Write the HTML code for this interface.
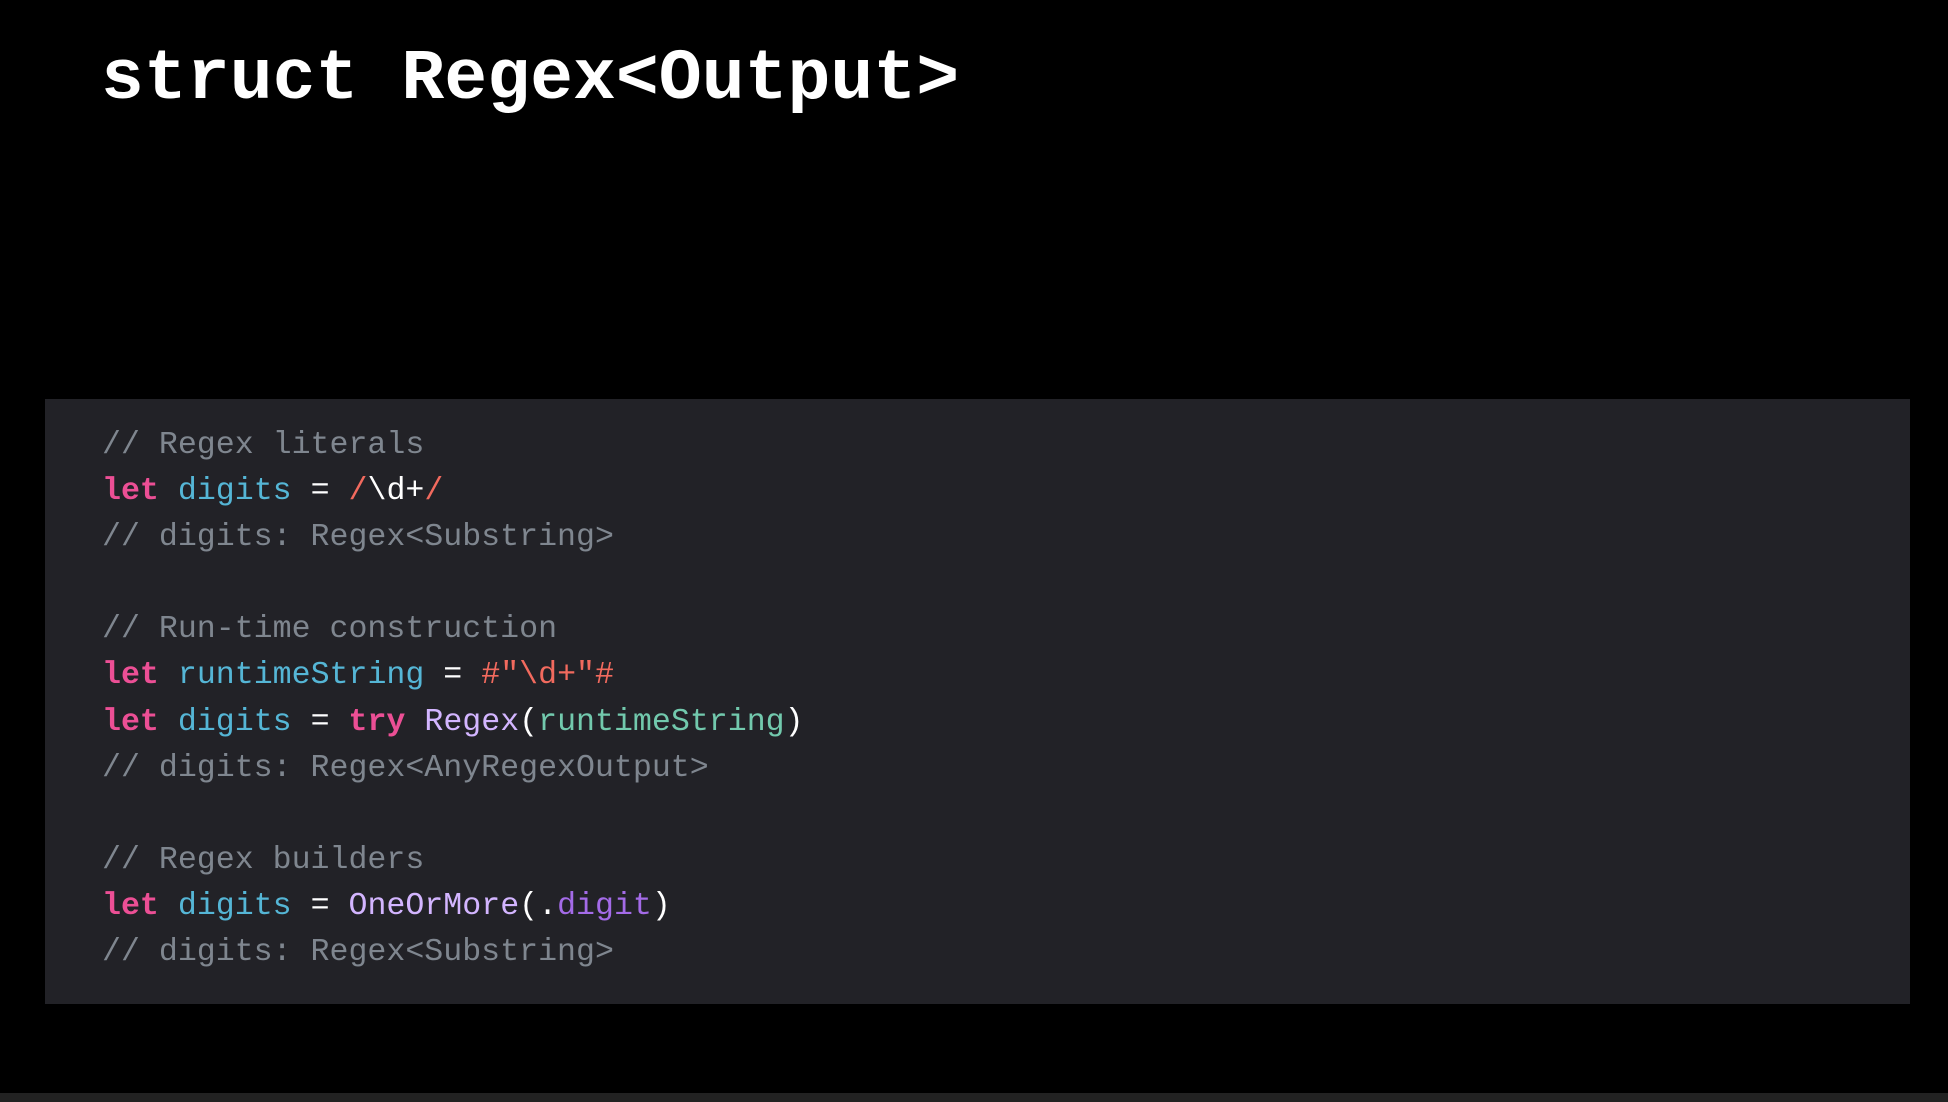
<!DOCTYPE html>
<html><head><meta charset="utf-8"><style>
html,body{margin:0;padding:0;background:#000;width:1948px;height:1102px;overflow:hidden;position:relative}
.t{position:absolute;left:101px;top:37px;font:bold 71.5px/86px "Liberation Mono",monospace;color:#fff;white-space:pre;margin:0}
.p{position:absolute;left:45px;top:399px;width:1865px;height:605px;background:#222227}
pre{position:absolute;left:102px;top:423px;margin:0;font:31.6px/46.1px "Liberation Mono",monospace;color:#fff}
.c{color:#7f868f}.k{color:#ec4f95;font-weight:bold}.v{color:#55b6d6}.s{color:#f26a5e}.ty{color:#d3b5ff}.f{color:#72c9ad}.m{color:#a46be8}
.b{position:absolute;left:0;top:1093px;width:1948px;height:9px;background:#222}
</style></head><body>
<div class="t">struct Regex&lt;Output&gt;</div>
<div class="p"></div>
<pre><span class="c">// Regex literals</span>
<span class="k">let</span> <span class="v">digits</span> = <span class="s">/</span>\d+<span class="s">/</span>
<span class="c">// digits: Regex&lt;Substring&gt;</span>

<span class="c">// Run-time construction</span>
<span class="k">let</span> <span class="v">runtimeString</span> = <span class="s">#"\d+"#</span>
<span class="k">let</span> <span class="v">digits</span> = <span class="k">try</span> <span class="ty">Regex</span>(<span class="f">runtimeString</span>)
<span class="c">// digits: Regex&lt;AnyRegexOutput&gt;</span>

<span class="c">// Regex builders</span>
<span class="k">let</span> <span class="v">digits</span> = <span class="ty">OneOrMore</span>(.<span class="m">digit</span>)
<span class="c">// digits: Regex&lt;Substring&gt;</span></pre>
<div class="b"></div>
</body></html>
